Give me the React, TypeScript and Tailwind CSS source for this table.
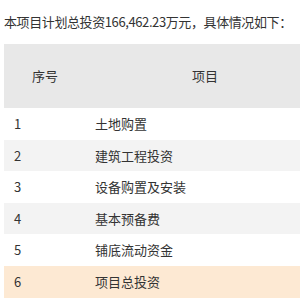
export default function App() {
  const rows = [
    ["1", "土地购置"],
    ["2", "建筑工程投资"],
    ["3", "设备购置及安装"],
    ["4", "基本预备费"],
    ["5", "铺底流动资金"],
    ["6", "项目总投资"],
  ];
  return (
    <div
      className="w-[300px] h-[300px] overflow-hidden bg-white text-[#333] text-[13px]"
      style={{ fontFamily: '"Noto Sans CJK SC", "Noto Sans", sans-serif' }}
    >
      <div className="h-[44px] flex items-center pl-[4px] whitespace-nowrap tracking-[-0.4px]">
        本项目计划总投资166,462.23万元，具体情况如下：
      </div>
      <div className="ml-[4px] w-[320px]">
        <div className="flex h-[64px] items-center bg-[#e8e8e8]">
          <div className="w-[82px] text-center">序号</div>
          <div className="w-[238px] text-center">项目</div>
        </div>
        {rows.map(([n, t], i) => (
          <div
            key={n}
            className={
              "flex h-[31.6px] items-center " +
              (i === 5 ? "bg-[#fde9d3]" : i % 2 === 1 ? "bg-[#f3f3f3]" : "bg-white")
            }
          >
            <div className="w-[82px] pl-[10px]">{n}</div>
            <div className="w-[238px] pl-[9px]">{t}</div>
          </div>
        ))}
      </div>
    </div>
  );
}
